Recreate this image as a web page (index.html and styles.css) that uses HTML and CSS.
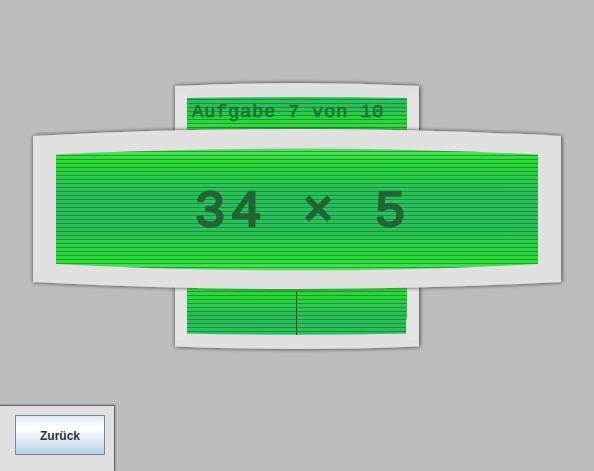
FILE: index.html
```html
<!DOCTYPE html>
<html lang="de">
<head>
<meta charset="utf-8">
<title>Kopfrechnen</title>
<link rel="stylesheet" href="styles.css">
</head>
<body>
<main class="stage">
<svg class="display" width="594" height="405" viewBox="0 0 594 405">
  <defs>
    <linearGradient id="header" gradientUnits="userSpaceOnUse" x1="0" y1="97" x2="0" y2="130">
      <stop offset="0" stop-color="#25c45a"/><stop offset=".3" stop-color="#25c354"/><stop offset=".75" stop-color="#21dd32"/><stop offset="1" stop-color="#45e24f"/>
    </linearGradient>
    <linearGradient id="task" gradientUnits="userSpaceOnUse" x1="0" y1="148" x2="0" y2="271">
      <stop offset="0" stop-color="#58e163"/><stop offset=".05" stop-color="#3fe049"/><stop offset=".1" stop-color="#21df30"/><stop offset=".15" stop-color="#21db34"/><stop offset=".33" stop-color="#25c553"/><stop offset=".5" stop-color="#26c15b"/><stop offset=".67" stop-color="#25c553"/><stop offset=".87" stop-color="#21db34"/><stop offset=".91" stop-color="#21df30"/><stop offset="1" stop-color="#58e163"/>
    </linearGradient>
    <linearGradient id="answer" gradientUnits="userSpaceOnUse" x1="0" y1="288" x2="0" y2="335">
      <stop offset="0" stop-color="#4be056"/><stop offset=".12" stop-color="#21df30"/><stop offset=".25" stop-color="#21d93a"/><stop offset=".5" stop-color="#25c553"/><stop offset="1" stop-color="#26c15b"/>
    </linearGradient>
    <pattern id="lines" width="4" height="4" patternUnits="userSpaceOnUse"><path d="M0 3h4v1H0z" fill="#2c5a3b" fill-opacity=".58"/></pattern>
    <filter id="shadow" x="-5%" y="-10%" width="110%" height="120%"><feDropShadow dx="0.5" dy="0" stdDeviation="2.200" flood-color="#000" flood-opacity=".75"/></filter>
  </defs>
  <path class="frame" d="M175 86Q297 80 419 86V346.500Q297 351.500 175 346.500Z"/>
  <path class="side" d="M175 94h12v246h-12zM407 94h12v246h-12z"/>
  <path fill="url(#header)" d="M187 98Q297 96 407 98V132H187Z"/>
  <path fill="url(#lines)" d="M187 98H407V132H187Z"/>
  <path fill="url(#answer)" d="M187 285H407V317L406 320V333.500Q297 336 187 333.500Z"/>
  <path fill="url(#lines)" d="M187 285H407V317L406 320V333.500H187Z"/>
  <path class="cursor" d="M296 292h1v43h-1z"/>
  <text class="progress" x="192" y="117">Aufgabe 7 von 10</text>
  <path class="frame" d="M33 136Q297 122 561 136V282Q297 296 33 282Z"/>
  <path fill="url(#task)" d="M56 154.500Q297 142.500 538 154.500V264Q297 277 56 264Z"/>
  <path fill="url(#lines)" d="M56 154.500Q297 142.500 538 154.500V264Q297 277 56 264Z"/>
  <text class="problem" x="194.500" y="225.500" xml:space="preserve">34 × 5</text>
</svg>
</main>
<footer class="toolbar"><button class="back" type="button">Zurück</button></footer>
</body>
</html>
```
FILE: styles.css
```css
* { box-sizing: border-box; }
body { margin: 0; width: 594px; height: 471px; overflow: hidden; background: #bcbcbc; }
.stage { height: 405px; }
.display { display: block; }
.frame { fill: #e0e0e0; filter: url(#shadow); }
.side { fill: #e4e4e4; }
.cursor { fill: #28392d; }
.progress, .problem {
  font-family: "Liberation Mono", monospace;
  font-weight: 400;
  fill: #226637;
  stroke: #226637;
  stroke-linejoin: round;
}
.progress { font-size: 19px; letter-spacing: .6px; stroke-width: .6px; fill: #1e7036; stroke: #1e7036; }
.problem { font-size: 52px; letter-spacing: 4.8px; stroke-width: 2.4px; }
.toolbar {
  width: 115px;
  height: 66px;
  padding: 9px 0 0 15px;
  background: #e0e0e0;
  border-top: 1px solid #666;
  border-right: 1px solid #666;
  box-shadow: 0 0 2px rgba(0, 0, 0, .4);
}
.back {
  display: block;
  width: 90px;
  height: 40px;
  padding: 1px 0 0;
  border: 1px solid #7a8a99;
  background: linear-gradient(#dde8f3 0%, #fff 30%, #fff 34%, #b8cfe5 100%);
  color: #333;
  font: 700 12px "Liberation Sans", Arial, sans-serif;
}
```
